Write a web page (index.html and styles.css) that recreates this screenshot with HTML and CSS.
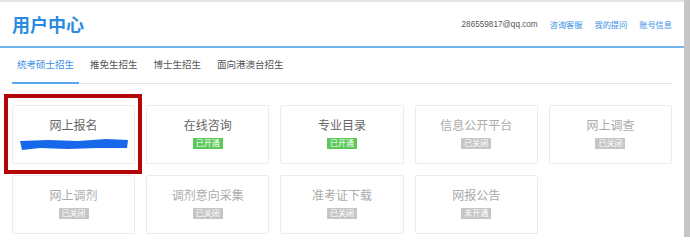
FILE: index.html
```html
<!DOCTYPE html>
<html lang="zh-CN">
<head>
    <meta charset="UTF-8">
    <meta name="viewport" content="width=device-width, initial-scale=1.0">
    <title>用户中心</title>
    <link rel="stylesheet" href="styles.css">
</head>
<body>

<div class="page">
    <div class="main">
        <header class="head">
            <h1>用户中心</h1>
            <div class="account">
                <span class="email">286559817@qq.com</span>
                <a href="#">咨询客服</a>
                <a href="#">我的提问</a>
                <a href="#">账号信息</a>
            </div>
        </header>

        <nav class="tabs">
            <a href="#" class="tab active">统考硕士招生</a>
            <a href="#" class="tab">推免生招生</a>
            <a href="#" class="tab">博士生招生</a>
            <a href="#" class="tab">面向港澳台招生</a>
        </nav>

        <div class="grid">
            <div class="card marked">
                <div class="card-title">网上报名</div>
                <svg class="scribble" width="112" height="14" viewBox="0 0 112 14">
                    <path d="M2 4 L30 3 L60 4 L88 2 L110 3 L109 11 L80 11 L50 12 L22 11 L4 13 Z" fill="#1767ea"/>
                </svg>
            </div>
            <div class="card">
                <div class="card-title">在线咨询</div>
                <span class="badge open">已开通</span>
            </div>
            <div class="card">
                <div class="card-title">专业目录</div>
                <span class="badge open">已开通</span>
            </div>
            <div class="card off">
                <div class="card-title">信息公开平台</div>
                <span class="badge">已关闭</span>
            </div>
            <div class="card off">
                <div class="card-title">网上调查</div>
                <span class="badge">已关闭</span>
            </div>
            <div class="card off">
                <div class="card-title">网上调剂</div>
                <span class="badge">已关闭</span>
            </div>
            <div class="card off">
                <div class="card-title">调剂意向采集</div>
                <span class="badge">已关闭</span>
            </div>
            <div class="card off">
                <div class="card-title">准考证下载</div>
                <span class="badge">已关闭</span>
            </div>
            <div class="card off">
                <div class="card-title">网报公告</div>
                <span class="badge">未开通</span>
            </div>
        </div>
    </div>
    <div class="strip"></div>
</div>

</body>
</html>
```

FILE: styles.css
```css
body {
    margin: 0;
    padding: 0;
    background: #fff;
    font-family: "Liberation Sans", "Noto Sans CJK SC", sans-serif;
    color: #555;
}
a {
    text-decoration: none;
}
.page {
    display: flex;
    align-items: flex-start;
}
.main {
    width: 684px;
    border-top: 2px solid #e6e6e6;
}
.strip {
    width: 6px;
    height: 237px;
    background: #c6c6c6;
}

/* header */
.head {
    height: 44px;
    display: flex;
    align-items: center;
    justify-content: space-between;
    padding: 0 12px;
    border-bottom: 2px solid #72b4ea;
}
.head h1 {
    margin: 0;
    font-size: 18px;
    font-weight: bold;
    color: #2a8be2;
}
.account {
    display: flex;
    align-items: center;
    font-size: 8.2px;
}
.email {
    color: #555;
}
.account a {
    color: #3a8fe6;
    margin-left: 12px;
}

/* tabs */
.tabs {
    display: flex;
    margin: 0 12px;
    border-bottom: 1px solid #e6e6e6;
    gap: 6px;
}
.tab {
    font-size: 9.5px;
    line-height: 34px;
    padding: 0 5px;
    color: #555;
    border-bottom: 2px solid transparent;
    margin-bottom: -1px;
}
.tab.active {
    color: #3a8fe6;
    border-bottom-color: #5aa6ea;
}

/* cards */
.grid {
    display: grid;
    grid-template-columns: repeat(5, 1fr);
    gap: 11px;
    padding: 21px 12px 0;
}
.card {
    position: relative;
    height: 59px;
    box-sizing: border-box;
    border: 1px solid #ececec;
    border-radius: 2px;
    display: flex;
    flex-direction: column;
    align-items: center;
    padding-top: 12px;
}
.card-title {
    font-size: 12px;
    line-height: 16px;
    color: #666;
    margin-bottom: 4px;
}
.card.off .card-title {
    color: #aaa;
}
.badge {
    font-size: 8px;
    line-height: 11px;
    padding: 0 3px;
    color: #fff;
    background: #c6c6c6;
}
.badge.open {
    background: #5cc85a;
}
.scribble {
    display: block;
    margin-top: -1px;
}
.card.marked::after {
    content: "";
    position: absolute;
    left: -9px;
    top: -12px;
    width: 138px;
    height: 80px;
    box-sizing: border-box;
    border: 4px solid #b40606;
}
```
